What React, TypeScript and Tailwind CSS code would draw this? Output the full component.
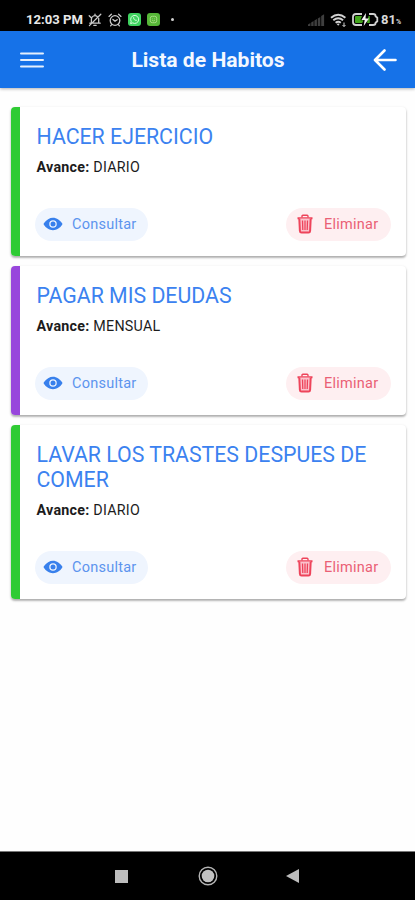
import { IoEye } from "react-icons/io5";

const HABITS = [
  { title: "HACER EJERCICIO", progress: "DIARIO", bar: "bg-[#2fcb34]" },
  { title: "PAGAR MIS DEUDAS", progress: "MENSUAL", bar: "bg-[#9846dc]" },
  { title: "LAVAR LOS TRASTES DESPUES DE COMER", progress: "DIARIO", bar: "bg-[#2fcb34]" },
];

function MutedBell() {
  return (
    <svg viewBox="0 0 14 14" className="ml-[5px] w-[14px] h-[14px]" fill="none" stroke="#c9c9c9" strokeWidth="1.3" strokeLinecap="round">
      <path d="M3.4 9.8V6.2a3.6 3.6 0 0 1 5.8-2.8M10.7 5.4v4.4M1.8 10.2h10.4M5.8 12.3h2.4M7 1.2v1M12.8 1.2 1.4 12.6M1.2 2.8l2 2" />
    </svg>
  );
}

function AlarmClock() {
  return (
    <svg viewBox="0 0 14 14" className="ml-[6px] w-[14px] h-[14px]" fill="none" stroke="#c9c9c9" strokeWidth="1.3" strokeLinecap="round">
      <circle cx="7" cy="7.5" r="4.8" />
      <path d="m4.9 6.4 2.1 1.7 2.2-1.4M1 3.4 3.4 1.3M13 3.4l-2.4-2.1M3.6 11.6l-1 1.2M10.4 11.6l1 1.2" />
    </svg>
  );
}

function StatusBar() {
  return (
    <div className="flex h-[31px] shrink-0 items-center bg-black pt-[8px] pl-[26px] text-white">
      <span className="w-[57px] whitespace-nowrap text-[13.1px] font-bold leading-none text-[#e8e8e8]">12:03 PM</span>
      <MutedBell />
      <AlarmClock />
      <svg viewBox="0 0 13 13" className="ml-[6px] w-[13px] h-[13px]">
        <rect width="13" height="13" rx="3" fill="#3fd360" />
        <path d="m2.6 10.6.6-2.2a4 4 0 1 1 1.5 1.5z" fill="none" stroke="#d9ffdf" strokeWidth="1" />
        <path d="M5.1 4.6c.1 1.8 1.4 3.1 3.2 3.4l.6-.9-1.2-.6-.5.4-1.1-1.1.3-.6-.5-1.1z" fill="#d9ffdf" />
      </svg>
      <svg viewBox="0 0 13 13" className="ml-[6px] w-[13px] h-[13px]">
        <rect width="13" height="13" rx="3" fill="#56b638" />
        <rect x="3.3" y="3.3" width="6.4" height="6.4" rx="2" fill="none" stroke="#a5dd82" strokeWidth="1" />
        <path d="M5 5.8h.8M7.2 5.8H8M5 7.4q1.5 1.1 3 0" stroke="#a5dd82" strokeWidth=".8" fill="none" />
      </svg>
      <span className="ml-[11px] h-[3px] w-[3px] rounded-full bg-[#d0d0d0]" />
      <svg viewBox="0 0 17 12" className="ml-[134px] w-[17px] h-[12px]" fill="#3f3f3f">
        <path d="M0 12V10.5L2.4 9v3zM3.2 12V8.4L5.6 7v5zM6.4 12V6.4L8.9 5v7zM9.8 12V4.4L12.3 3v9zM13.2 12V2l2.9-1.8V12z" />
      </svg>
      <svg viewBox="0 0 17 14" className="ml-[5px] w-[17px] h-[14px]" fill="none" stroke="#d2d2d2" strokeWidth="1.9">
        <path d="M1 4.7q7.2-6 14.4 0M3.3 7.3q4.9-4 9.8 0M5.6 9.8q2.6-2 5.2 0" />
        <path d="m8.2 12.7-1.5-1.6q1.5-1.1 3 0z" fill="#d2d2d2" stroke="none" />
        <path d="M14 9.5v4M12.5 12l1.5 1.5 1.5-1.5" strokeWidth="1" />
      </svg>
      <svg viewBox="0 0 27 13" className="ml-[5px] w-[27px] h-[13px]">
        <path d="M10 1H4a3 3 0 0 0-3 3v5a3 3 0 0 0 3 3h6M17 1h4q2.6 0 2.6 2.3l1.7 1.4v3.6l-1.7 1.4Q23.6 12 21 12h-4" fill="none" stroke="#d0d0d0" strokeWidth="1.8" />
        <path d="M4 3h6L8.4 7.2h3L10.2 10H4a1 1 0 0 1-1-1V4a1 1 0 0 1 1-1zM16.5 3h1.3v7H15z" fill="#43a51d" />
        <path d="M14 0 9.4 7h3.3l-1 6L17 5.4h-3.5z" fill="#f4f4f4" />
      </svg>
      <span className="ml-[2px] text-[13px] font-bold leading-none text-[#d9d9d9]">
        81<span className="text-[7px]">%</span>
      </span>
    </div>
  );
}

function TrashIcon() {
  return (
    <svg viewBox="0 0 16 20" className="h-[20px] w-[16px] shrink-0" fill="none" stroke="#ee445b" strokeWidth="2" strokeLinejoin="round">
      <path d="M5 3.6V2.2q0-.9.9-.9h4.2q.9 0 .9.9v1.4" strokeWidth="1.4" />
      <path d="M.5 4.3h15" />
      <path d="M2.3 4.6 2.9 17q.1 1.6 1.6 1.6h7q1.5 0 1.6-1.6l.6-12.4" fill="#fbc3cd" />
      <path d="M5.5 6.6 5.8 16M8 6.6V16M10.5 6.6 10.2 16" strokeWidth="1.3" />
    </svg>
  );
}

function HabitCard({ title, progress, bar }: { title: string; progress: string; bar: string }) {
  return (
    <div className="flex overflow-hidden rounded-[4px] bg-white shadow-[0_2px_2px_rgba(0,0,0,0.22),0_1px_3px_rgba(0,0,0,0.16)]">
      <div className={`w-[9px] shrink-0 ${bar}`} />
      <div className="flex-1 pt-[17px] pr-[15px] pb-[15px] pl-[15px]">
        <h2 className="pl-[1.5px] text-[21.3px] font-normal leading-[25.4px] text-[#3b82f0]">{title}</h2>
        <p className="mt-[8px] pl-[1.5px] text-[14.3px] leading-[18px] tracking-[0.25px] text-[#1c1c1c]">
          <b className="font-bold">Avance:</b> {progress}
        </p>
        <div className="mt-[32px] flex justify-between">
          <button className="flex h-[33px] w-[113px] items-center rounded-full bg-[#eff5fe] pl-[8px] text-[14.5px] tracking-[0.25px] text-[#5c94ee]">
            <IoEye className="mr-[9px] h-[20px] w-[20px] shrink-0 text-[#3880ec]" />
            <span className="pt-[1px]">Consultar</span>
          </button>
          <button className="flex h-[33px] w-[105px] items-center rounded-full bg-[#feeff1] pl-[11px] text-[14.5px] tracking-[0.25px] text-[#ea6075]">
            <TrashIcon />
            <span className="ml-[11px] pt-[1px]">Eliminar</span>
          </button>
        </div>
      </div>
    </div>
  );
}

export default function App() {
  return (
    <div className="flex h-[900px] w-[415px] flex-col overflow-hidden bg-white font-['Roboto',sans-serif]">
      <StatusBar />
      <header className="z-10 flex h-[57px] shrink-0 items-center justify-between bg-[#1672e8] pr-[18px] pl-[20px] shadow-[0_1px_3px_rgba(0,0,0,0.3)]">
        <svg viewBox="0 0 24 16" className="h-[16px] w-[24px]" stroke="#e4effd" strokeWidth="2" strokeLinecap="round">
          <path d="M1 1.5h22M1 8h22M1 14.5h22" />
        </svg>
        <h1 className="mr-[1px] pt-[1px] text-[21.1px] font-bold leading-none text-[#f4f8ff]">Lista de Habitos</h1>
        <svg viewBox="0 0 24 22" className="h-[22px] w-[24px]" fill="none" stroke="#fff" strokeWidth="2.6" strokeLinecap="round" strokeLinejoin="round">
          <path d="M11.5 1.5 2 11l9.5 9.5M2.5 11h20" />
        </svg>
      </header>
      <main className="flex flex-1 flex-col gap-[10.5px] bg-[#fefefe] pt-[19.2px] pr-[9px] pl-[11px]">
        {HABITS.map((h) => (
          <HabitCard key={h.title} {...h} />
        ))}
      </main>
      <nav className="flex h-[49px] shrink-0 items-center border-t border-[#777] bg-black pl-[115px]">
        <span className="h-[13px] w-[13px] bg-[#bdbdbd]" />
        <svg viewBox="0 0 20 20" className="ml-[70px] h-[20px] w-[20px]">
          <circle cx="10" cy="10" r="8.8" fill="none" stroke="#b5b5b5" strokeWidth="1.4" />
          <circle cx="10" cy="10" r="6.3" fill="#c2c2c2" />
        </svg>
        <svg viewBox="0 0 13 14" className="ml-[68px] h-[14px] w-[13px]">
          <path d="M13 0v14L0 7z" fill="#bdbdbd" />
        </svg>
      </nav>
    </div>
  );
}
